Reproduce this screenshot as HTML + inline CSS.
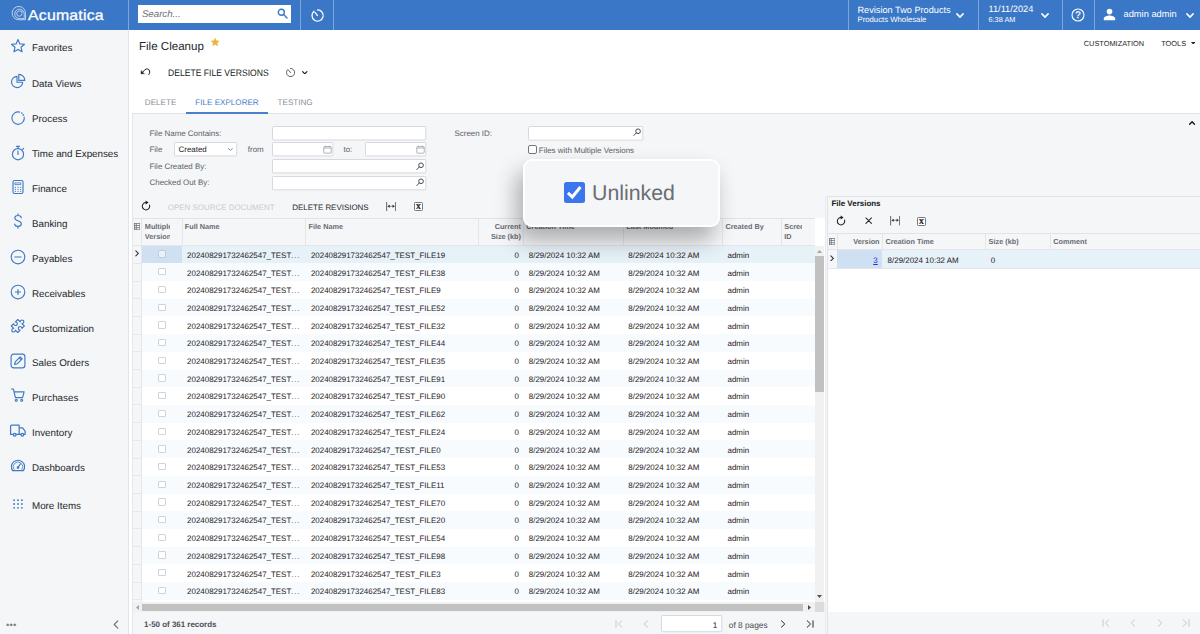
<!DOCTYPE html><html><head><meta charset="utf-8"><title>File Cleanup</title><style>
*{box-sizing:border-box;margin:0;padding:0}
html,body{width:1200px;height:634px;overflow:hidden;background:#fff;font-family:"Liberation Sans",sans-serif;color:#23262b;text-rendering:geometricPrecision}
.abs,.abs-c *{position:absolute}
div,span,svg,a{position:absolute;white-space:nowrap}
#top{left:0;top:0;width:1200px;height:30px;background:#3a77c6}
.tdiv{top:0;width:1px;height:30px;background:#7ea6da}
#side{left:0;top:30px;width:128px;height:604px;background:#f5f6f8}
#sideb{left:128px;top:30px;width:1px;height:604px;background:#e3e4e8}
.si{left:32px;font-size:9.8px;color:#23262b;line-height:12px}
.hd{font-size:7.3px;font-weight:bold;color:#686c73;line-height:9.6px}
.cell{font-size:7.95px;color:#1e2024;line-height:10px}
.lbl{font-size:7.95px;color:#5b6068;line-height:10px}
.inp{background:#fff;border:1px solid #e1e3e7;height:14.6px;border-radius:1px}
.tb{font-size:8.55px;line-height:10px;color:#23262b}
.vline{width:1px;background:#e4e6ea}
.hline{height:1px;background:#e4e6ea}
.cb{width:7.4px;height:7.3px;border:1px solid #d0d3d8;background:#fff;border-radius:1px}
</style></head><body>
<div id="top"></div>
<div class="tdiv" style="left:128px"></div>
<div class="tdiv" style="left:300px"></div>
<div class="tdiv" style="left:333px"></div>
<div class="tdiv" style="left:848px"></div>
<div class="tdiv" style="left:978px"></div>
<div class="tdiv" style="left:1062px"></div>
<div class="tdiv" style="left:1094px"></div>
<svg style="left:10.600px;top:5.300px" width="16.400" height="16.400" viewBox="10 5 17 17" fill="none" stroke="#fff" stroke-width=".85" opacity=".82"><path d="M25 20.300V13.600A6.900 6.900 0 1 0 18.100 20.300Z"/><path d="M23.700 19.100V14.300A4.900 4.900 0 1 0 18.800 19.100Z"/><path d="M21.300 11.300H18.600A2.700 2.700 0 1 0 21.300 14Z"/></svg>
<div style="left:28.200px;top:6.000px;font-size:14.5px;line-height:21px;color:#fff;letter-spacing:.2px;-webkit-text-stroke:.28px #fff;transform:scaleX(1.092);transform-origin:0 50%">Acumatica</div>
<div style="left:137.8px;top:4.7px;width:153.5px;height:18.2px;background:#fff"></div>
<div style="left:141.9px;top:9.8px;font-size:9.7px;line-height:10px;font-style:italic;color:#6b7078">Search...</div>
<svg style="left:277px;top:8px" width="11" height="11" viewBox="0 0 11 11" fill="none" stroke="#3a77c6" stroke-width="1.4"><circle cx="4.3" cy="4.3" r="3"/><path d="M6.6 6.6L10 10" stroke-linecap="round"/></svg>
<svg style="left:310px;top:8px" width="15" height="15" viewBox="0 0 15 15" fill="none" stroke="#fff" stroke-width="1.3" stroke-linecap="round"><path d="M4 3.2A5.6 5.6 0 1 0 7.5 1.9"/><path d="M7.5 7.6L4.9 4.4"/></svg>
<div style="left:857.5px;top:4.6px;font-size:9.18px;line-height:10px;color:#fff">Revision Two Products</div>
<div style="left:857.5px;top:15.2px;font-size:7.75px;line-height:9px;color:#fff">Products Wholesale</div>
<svg style="left:956px;top:13px" width="8" height="5.2" viewBox="0 0 8 5.2" fill="none" stroke="#fff" stroke-width="1.55" stroke-linecap="round" stroke-linejoin="round"><path d="M.9 .9L4 4.1L7.1 .9"/></svg>
<div style="left:988.5px;top:3.6px;font-size:9.22px;line-height:10px;color:#fff">11/11/2024</div>
<div style="left:988.5px;top:15.2px;font-size:7.35px;line-height:9px;color:#fff">6:38 AM</div>
<svg style="left:1041px;top:13px" width="8" height="5.2" viewBox="0 0 8 5.2" fill="none" stroke="#fff" stroke-width="1.55" stroke-linecap="round" stroke-linejoin="round"><path d="M.9 .9L4 4.1L7.1 .9"/></svg>
<svg style="left:1071px;top:8px" width="14" height="14" viewBox="0 0 14 14"><circle cx="7" cy="7" r="6" fill="none" stroke="#fff" stroke-width="1.1"/><text x="7" y="10.3" font-size="9.6" fill="#fff" stroke="#fff" stroke-width=".25" text-anchor="middle" font-family="Liberation Sans, sans-serif">?</text></svg>
<svg style="left:1103px;top:8px" width="13" height="13" viewBox="0 0 13 13" fill="#fff"><circle cx="6.5" cy="3.6" r="2.8"/><path d="M.8 12.2V10.6C.8 8.4 4.4 7.4 6.5 7.4S12.2 8.4 12.2 10.6V12.2Z"/></svg>
<div style="left:1123.5px;top:8.5px;font-size:9.3px;line-height:11px;color:#fff">admin admin</div>
<svg style="left:1185.6px;top:13px" width="8" height="5.2" viewBox="0 0 8 5.2" fill="none" stroke="#fff" stroke-width="1.55" stroke-linecap="round" stroke-linejoin="round"><path d="M.9 .9L4 4.1L7.1 .9"/></svg>
<div id="side"></div><div id="sideb"></div>
<div class="si" style="top:42.9px">Favorites</div>
<div class="si" style="top:79.1px">Data Views</div>
<div class="si" style="top:114.1px">Process</div>
<div class="si" style="top:148.9px">Time and Expenses</div>
<div class="si" style="top:184.0px">Finance</div>
<div class="si" style="top:218.9px">Banking</div>
<div class="si" style="top:253.8px">Payables</div>
<div class="si" style="top:288.7px">Receivables</div>
<div class="si" style="top:323.5px">Customization</div>
<div class="si" style="top:358.3px">Sales Orders</div>
<div class="si" style="top:393.1px">Purchases</div>
<div class="si" style="top:428.0px">Inventory</div>
<div class="si" style="top:462.9px">Dashboards</div>
<div class="si" style="top:500.9px">More Items</div>
<svg style="left:10.4px;top:37.7px" width="16" height="16" viewBox="0 0 16 16" fill="none" stroke="#3f7ac6" stroke-width="1.15" stroke-linecap="round" stroke-linejoin="round"><path d="M8 1.6l1.9 4.3 4.6.4-3.5 3 1.1 4.5L8 11.4 3.9 13.8 5 9.3 1.5 6.3l4.6-.4z"/></svg>
<svg style="left:10.4px;top:72.7px" width="16" height="16" viewBox="0 0 16 16" fill="none" stroke="#3f7ac6" stroke-width="1.15" stroke-linecap="round" stroke-linejoin="round"><path d="M7 3.4A5.6 5.6 0 1 0 12.7 9.2H7z"/><path d="M8.8 1.4v6h6A6 6 0 0 0 8.800 1.400z"/></svg>
<svg style="left:10.4px;top:109.5px" width="16" height="16" viewBox="0 0 16 16" fill="none" stroke="#3f7ac6" stroke-width="1.15" stroke-linecap="round" stroke-linejoin="round"><path d="M9.5 2.1A6.200 6.200 0 1 0 14.2 7"/><circle cx="11.700" cy="3.1" r=".3"/><circle cx="13.300" cy="4.900" r=".3"/></svg>
<svg style="left:10.4px;top:144.6px" width="16" height="16" viewBox="0 0 16 16" fill="none" stroke="#3f7ac6" stroke-width="1.15" stroke-linecap="round" stroke-linejoin="round"><circle cx="8" cy="9.2" r="5.6"/><path d="M8 6v3.400M6.500 1.300h3M8 1.300v2.200M12.700 4.300l.9-.9"/></svg>
<svg style="left:10.4px;top:179.1px" width="16" height="16" viewBox="0 0 16 16" fill="none" stroke="#3f7ac6" stroke-width="1.15" stroke-linecap="round" stroke-linejoin="round"><rect x="3" y="1.5" width="10" height="13" rx="1.5"/><path d="M5.200 3.900h5.600v1.700H5.200z" stroke-width=".8"/><path d="M5.300 8.300h.1M8 8.300h.1M10.700 8.300h.1M5.300 10.300h.1M8 10.300h.1M10.700 10.300h.1M5.300 12.300h.1M8 12.300h.1M10.700 12.300h.1" stroke-width="1.150"/></svg>
<svg style="left:10.4px;top:213.3px" width="16" height="16" viewBox="0 0 16 16" fill="none" stroke="#3f7ac6" stroke-width="1.15" stroke-linecap="round" stroke-linejoin="round"><path d="M11.200 4.800C11.200 3.300 9.800 2.500 8 2.500S4.800 3.400 4.800 5C4.800 8.300 11.300 7.300 11.300 10.800 11.300 12.500 9.800 13.400 8 13.400S4.700 12.500 4.700 11M8 .8v1.700M8 13.400v1.800"/></svg>
<svg style="left:10.4px;top:248.7px" width="16" height="16" viewBox="0 0 16 16" fill="none" stroke="#3f7ac6" stroke-width="1.15" stroke-linecap="round" stroke-linejoin="round"><circle cx="8" cy="8" r="6.800"/><path d="M4.800 8h6.400"/></svg>
<svg style="left:10.4px;top:283.6px" width="16" height="16" viewBox="0 0 16 16" fill="none" stroke="#3f7ac6" stroke-width="1.15" stroke-linecap="round" stroke-linejoin="round"><circle cx="8" cy="8" r="6.800"/><path d="M5.500 8h5M8 5.500v5"/></svg>
<svg style="left:10.4px;top:318.3px" width="16" height="16" viewBox="0 0 16 16" fill="none" stroke="#3f7ac6" stroke-width="1.15" stroke-linecap="round" stroke-linejoin="round"><path d="M-4.6 -4.6H-1.2A1.8 1.8 0 1 1 1.2 -4.6H4.6V-1.2A1.8 1.8 0 1 0 4.6 1.2V4.6H1.2A1.8 1.8 0 1 1 -1.2 4.6H-4.6V1.2A1.8 1.8 0 1 0 -4.6 -1.2Z" transform="translate(7.8,8) rotate(45)"/></svg>
<svg style="left:10.4px;top:353.3px" width="16" height="16" viewBox="0 0 16 16" fill="none" stroke="#3f7ac6" stroke-width="1.15" stroke-linecap="round" stroke-linejoin="round"><rect x="1.100" y="1.100" width="13.800" height="13.800" rx="2.600"/><path d="M4.600 11.400l.6-2.600 5-5 2 2-5 5zM9.200 4.800l2 2"/></svg>
<svg style="left:10.4px;top:387.2px" width="16" height="16" viewBox="0 0 16 16" fill="none" stroke="#3f7ac6" stroke-width="1.15" stroke-linecap="round" stroke-linejoin="round"><path d="M1.400 2h2l2 8.600h7.200l1.500-5.800H4.500"/><circle cx="6.300" cy="13.200" r="1"/><circle cx="11.700" cy="13.200" r="1"/></svg>
<svg style="left:9px;top:421.2px" width="18" height="18" viewBox="0 0 17 16" fill="none" stroke="#3f7ac6" stroke-width="1.15" stroke-linecap="round" stroke-linejoin="round"><path d="M4 12.200H1.500V4.300c0-.5.400-.9.900-.9h7.200v8.800H6.800M9.600 6h3.200l2.400 3v3.200h-1.100M9.600 12.200h1.600"/><circle cx="5.400" cy="12.400" r="1.300"/><circle cx="12.600" cy="12.400" r="1.300"/></svg>
<svg style="left:10.4px;top:457.3px" width="16" height="16" viewBox="0 0 16 16" fill="none" stroke="#3f7ac6" stroke-width="1.15" stroke-linecap="round" stroke-linejoin="round"><path d="M2.600 13.600A6.600 6.600 0 1 1 13.400 13.600z"/><path d="M4 12.500A4.800 4.800 0 1 1 12 12.500" stroke-width=".8"/><path d="M8 10.500l2.400-3.600"/><circle cx="8" cy="10.600" r=".8"/></svg>
<svg style="left:10.6px;top:497.4px" width="14" height="14" viewBox="0 0 16 16" fill="none" stroke="#3f7ac6" stroke-width="1.15" stroke-linecap="round" stroke-linejoin="round"><circle cx="3.6" cy="3.6" r="1.05" fill="#3f7ac6" stroke="none"/><circle cx="3.6" cy="8" r="1.05" fill="#3f7ac6" stroke="none"/><circle cx="3.6" cy="12.4" r="1.05" fill="#3f7ac6" stroke="none"/><circle cx="8" cy="3.6" r="1.05" fill="#3f7ac6" stroke="none"/><circle cx="8" cy="8" r="1.05" fill="#3f7ac6" stroke="none"/><circle cx="8" cy="12.4" r="1.05" fill="#3f7ac6" stroke="none"/><circle cx="12.4" cy="3.6" r="1.05" fill="#3f7ac6" stroke="none"/><circle cx="12.4" cy="8" r="1.05" fill="#3f7ac6" stroke="none"/><circle cx="12.4" cy="12.4" r="1.05" fill="#3f7ac6" stroke="none"/></svg>
<div style="left:6px;top:622px;font-size:9.5px;line-height:8px;color:#7b8088;letter-spacing:.2px">•••</div>
<svg style="left:113px;top:619.5px" width="6" height="9" viewBox="0 0 6 9" fill="none" stroke="#6f747c" stroke-width="1.2" stroke-linecap="round" stroke-linejoin="round"><path d="M4.800 .9L1.200 4.500 4.800 8.100"/></svg>
<div style="left:139px;top:40.3px;font-size:11.55px;line-height:14px;color:#23262b">File Cleanup</div>
<svg style="left:209px;top:36px" width="12" height="12" viewBox="209 36 12 12"><polygon points="215.15,38.15 216.33,40.73 219.14,41.05 217.05,42.97 217.62,45.75 215.15,44.35 212.68,45.75 213.25,42.97 211.16,41.05 213.97,40.73" fill="#ebb43c" stroke="#ebb43c" stroke-width=".5" stroke-linejoin="round"/></svg>
<div class="tb" style="left:1083.8px;top:38.9px;font-size:7.38px">CUSTOMIZATION</div>
<div class="tb" style="left:1161.2px;top:38.9px;font-size:7.38px">TOOLS</div>
<svg style="left:1190.5px;top:41.700px" width="4.4" height="2.8" viewBox="0 0 5 3"><path d="M0 0h5L2.500 3z" fill="#23262b"/></svg>
<svg style="left:139px;top:66px" width="13" height="11" viewBox="139 66 13 11" fill="none" stroke="#17191c" stroke-width="1" stroke-linecap="round" stroke-linejoin="round"><path d="M141.700 73.100L145 69.700C146.600 68.300 149 68.700 149.600 71C150 72.600 149.400 74 148.600 74.800"/><path d="M141.100 70.900V73.700H144Z" fill="#17191c" stroke-width=".5"/></svg>
<div class="tb" style="left:167.5px;top:67.6px;color:#17191c;transform:scale(1.004,1.1);transform-origin:0 78%">DELETE FILE VERSIONS</div>
<svg style="left:285px;top:66.500px" width="11" height="11" viewBox="0 0 15 15" fill="none" stroke="#33363b" stroke-width="1.05" stroke-linecap="round"><path d="M4 3.200A5.600 5.600 0 1 0 7.500 1.900"/><path d="M7.500 7.600L4.900 4.400"/></svg>
<svg style="left:302px;top:70.6px" width="5.6" height="3.6" viewBox="0 0 8 5.2" fill="none" stroke="#1a1c1f" stroke-width="1.7" stroke-linecap="round" stroke-linejoin="round"><path d="M.9 .9L4 4.1L7.1 .9"/></svg>
<div class="tb" style="left:144.800px;top:97.900px;color:#8a8f97;font-size:8.1px">DELETE</div>
<div class="tb" style="left:195.300px;top:97.900px;color:#4a7fca;font-size:8.1px">FILE EXPLORER</div>
<div class="tb" style="left:277.600px;top:97.900px;color:#8a8f97;font-size:8.1px">TESTING</div>
<div style="left:132px;top:113px;width:1068px;height:521px;background:#f5f6f8;border-top:1.4px solid #e2e3e7;border-left:1px solid #e6e7ea"></div>
<div style="left:186px;top:111.800px;width:82px;height:1.8px;background:#4a7fca"></div>
<svg style="left:1188.6px;top:120.6px" width="6.2" height="4.0" viewBox="0 0 8 5.2" fill="none" stroke="#1a1c1f" stroke-width="1.9" stroke-linecap="round" stroke-linejoin="round"><path d="M.9 4.300L4 1.100 7.100 4.300"/></svg>
<div class="lbl" style="left:149.500px;top:128.800px">File Name Contains:</div>
<div class="lbl" style="left:149.500px;top:145.400px">File</div>
<div class="lbl" style="left:149.500px;top:161.800px">File Created By:</div>
<div class="lbl" style="left:149.500px;top:178.400px">Checked Out By:</div>
<svg style="left:272.10px;top:125.60px;overflow:visible" width="154.30" height="14.50"><rect x=".5" y=".5" width="153.30" height="13.50" rx=".8" fill="#fff" stroke="#d6d9de" stroke-width="1"/></svg>
<svg style="left:174.30px;top:142.30px;overflow:visible" width="63.20" height="14.40"><rect x=".5" y=".5" width="62.20" height="13.40" rx=".8" fill="#fff" stroke="#d6d9de" stroke-width="1"/></svg>
<div class="cell" style="left:178.500px;top:145.400px">Created</div>
<svg style="left:227.8px;top:148.3px" width="4.8" height="3.1" viewBox="0 0 8 5.2" fill="none" stroke="#50545b" stroke-width="1.2" stroke-linecap="round" stroke-linejoin="round"><path d="M.9 .9L4 4.1L7.1 .9"/></svg>
<div class="lbl" style="left:247.800px;top:145.400px">from</div>
<svg style="left:272.10px;top:142.30px;overflow:visible" width="61.40" height="14.40"><rect x=".5" y=".5" width="60.40" height="13.40" rx=".8" fill="#fff" stroke="#d6d9de" stroke-width="1"/></svg>
<div class="lbl" style="left:343.500px;top:145.400px">to:</div>
<svg style="left:365.20px;top:142.30px;overflow:visible" width="61.20" height="14.40"><rect x=".5" y=".5" width="60.20" height="13.40" rx=".8" fill="#fff" stroke="#d6d9de" stroke-width="1"/></svg>
<svg style="left:272.10px;top:158.90px;overflow:visible" width="154.30" height="14.40"><rect x=".5" y=".5" width="153.30" height="13.40" rx=".8" fill="#fff" stroke="#d6d9de" stroke-width="1"/></svg>
<svg style="left:272.10px;top:175.55px;overflow:visible" width="154.30" height="14.35"><rect x=".5" y=".5" width="153.30" height="13.35" rx=".8" fill="#fff" stroke="#d6d9de" stroke-width="1"/></svg>
<svg style="left:323.3px;top:145px" width="9" height="9" viewBox="0 0 9 9" fill="none" stroke="#9a9ea5" stroke-width=".8"><rect x=".8" y="1.600" width="7.400" height="6.600" rx=".8"/><path d="M.8 3h7.400M2.600 .6v1.400M6.400 .6v1.400"/></svg>
<svg style="left:415.5px;top:145px" width="9" height="9" viewBox="0 0 9 9" fill="none" stroke="#9a9ea5" stroke-width=".8"><rect x=".8" y="1.600" width="7.400" height="6.600" rx=".8"/><path d="M.8 3h7.400M2.600 .6v1.400M6.400 .6v1.400"/></svg>
<svg style="left:415.5px;top:161.6px" width="8.400" height="8.400" viewBox="0 0 9 9" fill="none" stroke="#3a3d42" stroke-width="1"><circle cx="5.400" cy="3.500" r="2.500"/><path d="M3.600 5.300L.9 8" stroke-linecap="round"/></svg>
<svg style="left:415.5px;top:178.2px" width="8.400" height="8.400" viewBox="0 0 9 9" fill="none" stroke="#3a3d42" stroke-width="1"><circle cx="5.400" cy="3.500" r="2.500"/><path d="M3.600 5.300L.9 8" stroke-linecap="round"/></svg>
<div class="lbl" style="left:454.500px;top:128.800px">Screen ID:</div>
<svg style="left:528.20px;top:125.50px;overflow:visible" width="115.30" height="14.70"><rect x=".5" y=".5" width="114.30" height="13.70" rx=".8" fill="#fff" stroke="#d6d9de" stroke-width="1"/></svg>
<svg style="left:632.5px;top:128.4px" width="8.400" height="8.400" viewBox="0 0 9 9" fill="none" stroke="#3a3d42" stroke-width="1"><circle cx="5.400" cy="3.500" r="2.500"/><path d="M3.600 5.300L.9 8" stroke-linecap="round"/></svg>
<div style="left:528.300px;top:145.300px;width:8.400px;height:8.400px;border:1px solid #74777c;border-radius:2px;background:#fff"></div>
<div class="lbl" style="left:538.800px;top:145.800px">Files with Multiple Versions</div>
<svg style="left:141.100px;top:200.300px" width="10" height="11" viewBox="0 0 10 11" fill="none" stroke="#1e2024" stroke-width="1.05" stroke-linecap="round"><path d="M8.550 5.100A3.700 3.700 0 1 1 5 2.500"/><path d="M4.600 .5V4.500L7.600 2.500Z" fill="#1e2024" stroke="none"/></svg>
<div class="tb" style="left:167.800px;top:202.600px;color:#c9ccd1;font-size:7.95px">OPEN SOURCE DOCUMENT</div>
<div class="tb" style="left:292.300px;top:202.600px;font-size:7.95px">DELETE REVISIONS</div>
<svg style="left:385.7px;top:201.6px" width="10.300" height="9.400" viewBox="0 0 11 9" preserveAspectRatio="none" fill="none" stroke="#3d3f44" stroke-width=".8"><path d="M.7 0v9M10.300 0v9"/><path d="M3 4.100h5" stroke="#85888d" stroke-width=".9"/><path d="M1.500 4.100L4 2.600V5.600ZM9.500 4.100L7 2.600V5.600Z" fill="#23262b" stroke="none"/></svg>
<svg style="left:413.8px;top:202px" width="9" height="9" viewBox="0 0 9 9"><rect x=".5" y=".5" width="8" height="8" rx=".9" fill="#fff" stroke="#55585d" stroke-width=".8"/><text x="4.500" y="7.050" font-size="7.300" font-weight="bold" text-anchor="middle" fill="#111" stroke="#111" stroke-width=".22" font-family="Liberation Serif, serif">X</text></svg>
<div style="left:133px;top:218.400px;width:691.5px;height:384px;background:#fff"></div>
<div style="left:133px;top:218.400px;width:681.7px;height:27.2px;background:#f5f6f8;border-top:1px solid #e2e3e7"></div>
<div style="left:141.7px;top:245.60px;width:673.0px;height:17.71px;background:#e7f1f8"></div>
<div style="left:141.7px;top:245.60px;width:40.5px;height:17.71px;background:#cfe0f2"></div>
<div class="cb" style="left:158.200px;top:250.40px;background:#e9f1fa;border-color:#c3cbd6"></div>
<div class="cell" style="left:187.100px;top:250.80px">202408291732462547_TEST<span style="position:static;letter-spacing:.75px;color:#63676d">...</span></div>
<div class="cell" style="left:310.900px;top:250.80px">202408291732462547_TEST_FILE19</div>
<div class="cell" style="left:500px;width:19px;text-align:right;top:250.80px">0</div>
<div class="cell" style="left:528.800px;top:250.80px">8/29/2024 10:32 AM</div>
<div class="cell" style="left:628.300px;top:250.80px">8/29/2024 10:32 AM</div>
<div class="cell" style="left:727.500px;top:250.80px">admin</div>
<div style="left:141.7px;top:263.31px;width:673.0px;height:17.71px;background:#f8fbfe"></div>
<div class="cb" style="left:158.200px;top:268.11px"></div>
<div class="cell" style="left:187.100px;top:268.51px">202408291732462547_TEST<span style="position:static;letter-spacing:.75px;color:#63676d">...</span></div>
<div class="cell" style="left:310.900px;top:268.51px">202408291732462547_TEST_FILE38</div>
<div class="cell" style="left:500px;width:19px;text-align:right;top:268.51px">0</div>
<div class="cell" style="left:528.800px;top:268.51px">8/29/2024 10:32 AM</div>
<div class="cell" style="left:628.300px;top:268.51px">8/29/2024 10:32 AM</div>
<div class="cell" style="left:727.500px;top:268.51px">admin</div>
<div style="left:141.7px;top:281.02px;width:673.0px;height:17.71px;background:#ffffff"></div>
<div class="cb" style="left:158.200px;top:285.82px"></div>
<div class="cell" style="left:187.100px;top:286.22px">202408291732462547_TEST<span style="position:static;letter-spacing:.75px;color:#63676d">...</span></div>
<div class="cell" style="left:310.900px;top:286.22px">202408291732462547_TEST_FILE9</div>
<div class="cell" style="left:500px;width:19px;text-align:right;top:286.22px">0</div>
<div class="cell" style="left:528.800px;top:286.22px">8/29/2024 10:32 AM</div>
<div class="cell" style="left:628.300px;top:286.22px">8/29/2024 10:32 AM</div>
<div class="cell" style="left:727.500px;top:286.22px">admin</div>
<div style="left:141.7px;top:298.73px;width:673.0px;height:17.71px;background:#f8fbfe"></div>
<div class="cb" style="left:158.200px;top:303.53px"></div>
<div class="cell" style="left:187.100px;top:303.93px">202408291732462547_TEST<span style="position:static;letter-spacing:.75px;color:#63676d">...</span></div>
<div class="cell" style="left:310.900px;top:303.93px">202408291732462547_TEST_FILE52</div>
<div class="cell" style="left:500px;width:19px;text-align:right;top:303.93px">0</div>
<div class="cell" style="left:528.800px;top:303.93px">8/29/2024 10:32 AM</div>
<div class="cell" style="left:628.300px;top:303.93px">8/29/2024 10:32 AM</div>
<div class="cell" style="left:727.500px;top:303.93px">admin</div>
<div style="left:141.7px;top:316.44px;width:673.0px;height:17.71px;background:#ffffff"></div>
<div class="cb" style="left:158.200px;top:321.24px"></div>
<div class="cell" style="left:187.100px;top:321.64px">202408291732462547_TEST<span style="position:static;letter-spacing:.75px;color:#63676d">...</span></div>
<div class="cell" style="left:310.900px;top:321.64px">202408291732462547_TEST_FILE32</div>
<div class="cell" style="left:500px;width:19px;text-align:right;top:321.64px">0</div>
<div class="cell" style="left:528.800px;top:321.64px">8/29/2024 10:32 AM</div>
<div class="cell" style="left:628.300px;top:321.64px">8/29/2024 10:32 AM</div>
<div class="cell" style="left:727.500px;top:321.64px">admin</div>
<div style="left:141.7px;top:334.15px;width:673.0px;height:17.71px;background:#f8fbfe"></div>
<div class="cb" style="left:158.200px;top:338.95px"></div>
<div class="cell" style="left:187.100px;top:339.35px">202408291732462547_TEST<span style="position:static;letter-spacing:.75px;color:#63676d">...</span></div>
<div class="cell" style="left:310.900px;top:339.35px">202408291732462547_TEST_FILE44</div>
<div class="cell" style="left:500px;width:19px;text-align:right;top:339.35px">0</div>
<div class="cell" style="left:528.800px;top:339.35px">8/29/2024 10:32 AM</div>
<div class="cell" style="left:628.300px;top:339.35px">8/29/2024 10:32 AM</div>
<div class="cell" style="left:727.500px;top:339.35px">admin</div>
<div style="left:141.7px;top:351.86px;width:673.0px;height:17.71px;background:#ffffff"></div>
<div class="cb" style="left:158.200px;top:356.66px"></div>
<div class="cell" style="left:187.100px;top:357.06px">202408291732462547_TEST<span style="position:static;letter-spacing:.75px;color:#63676d">...</span></div>
<div class="cell" style="left:310.900px;top:357.06px">202408291732462547_TEST_FILE35</div>
<div class="cell" style="left:500px;width:19px;text-align:right;top:357.06px">0</div>
<div class="cell" style="left:528.800px;top:357.06px">8/29/2024 10:32 AM</div>
<div class="cell" style="left:628.300px;top:357.06px">8/29/2024 10:32 AM</div>
<div class="cell" style="left:727.500px;top:357.06px">admin</div>
<div style="left:141.7px;top:369.57px;width:673.0px;height:17.71px;background:#f8fbfe"></div>
<div class="cb" style="left:158.200px;top:374.37px"></div>
<div class="cell" style="left:187.100px;top:374.77px">202408291732462547_TEST<span style="position:static;letter-spacing:.75px;color:#63676d">...</span></div>
<div class="cell" style="left:310.900px;top:374.77px">202408291732462547_TEST_FILE91</div>
<div class="cell" style="left:500px;width:19px;text-align:right;top:374.77px">0</div>
<div class="cell" style="left:528.800px;top:374.77px">8/29/2024 10:32 AM</div>
<div class="cell" style="left:628.300px;top:374.77px">8/29/2024 10:32 AM</div>
<div class="cell" style="left:727.500px;top:374.77px">admin</div>
<div style="left:141.7px;top:387.28px;width:673.0px;height:17.71px;background:#ffffff"></div>
<div class="cb" style="left:158.200px;top:392.08px"></div>
<div class="cell" style="left:187.100px;top:392.48px">202408291732462547_TEST<span style="position:static;letter-spacing:.75px;color:#63676d">...</span></div>
<div class="cell" style="left:310.900px;top:392.48px">202408291732462547_TEST_FILE90</div>
<div class="cell" style="left:500px;width:19px;text-align:right;top:392.48px">0</div>
<div class="cell" style="left:528.800px;top:392.48px">8/29/2024 10:32 AM</div>
<div class="cell" style="left:628.300px;top:392.48px">8/29/2024 10:32 AM</div>
<div class="cell" style="left:727.500px;top:392.48px">admin</div>
<div style="left:141.7px;top:404.99px;width:673.0px;height:17.71px;background:#f8fbfe"></div>
<div class="cb" style="left:158.200px;top:409.79px"></div>
<div class="cell" style="left:187.100px;top:410.19px">202408291732462547_TEST<span style="position:static;letter-spacing:.75px;color:#63676d">...</span></div>
<div class="cell" style="left:310.900px;top:410.19px">202408291732462547_TEST_FILE62</div>
<div class="cell" style="left:500px;width:19px;text-align:right;top:410.19px">0</div>
<div class="cell" style="left:528.800px;top:410.19px">8/29/2024 10:32 AM</div>
<div class="cell" style="left:628.300px;top:410.19px">8/29/2024 10:32 AM</div>
<div class="cell" style="left:727.500px;top:410.19px">admin</div>
<div style="left:141.7px;top:422.70px;width:673.0px;height:17.71px;background:#ffffff"></div>
<div class="cb" style="left:158.200px;top:427.50px"></div>
<div class="cell" style="left:187.100px;top:427.90px">202408291732462547_TEST<span style="position:static;letter-spacing:.75px;color:#63676d">...</span></div>
<div class="cell" style="left:310.900px;top:427.90px">202408291732462547_TEST_FILE24</div>
<div class="cell" style="left:500px;width:19px;text-align:right;top:427.90px">0</div>
<div class="cell" style="left:528.800px;top:427.90px">8/29/2024 10:32 AM</div>
<div class="cell" style="left:628.300px;top:427.90px">8/29/2024 10:32 AM</div>
<div class="cell" style="left:727.500px;top:427.90px">admin</div>
<div style="left:141.7px;top:440.41px;width:673.0px;height:17.71px;background:#f8fbfe"></div>
<div class="cb" style="left:158.200px;top:445.21px"></div>
<div class="cell" style="left:187.100px;top:445.61px">202408291732462547_TEST<span style="position:static;letter-spacing:.75px;color:#63676d">...</span></div>
<div class="cell" style="left:310.900px;top:445.61px">202408291732462547_TEST_FILE0</div>
<div class="cell" style="left:500px;width:19px;text-align:right;top:445.61px">0</div>
<div class="cell" style="left:528.800px;top:445.61px">8/29/2024 10:32 AM</div>
<div class="cell" style="left:628.300px;top:445.61px">8/29/2024 10:32 AM</div>
<div class="cell" style="left:727.500px;top:445.61px">admin</div>
<div style="left:141.7px;top:458.12px;width:673.0px;height:17.71px;background:#ffffff"></div>
<div class="cb" style="left:158.200px;top:462.92px"></div>
<div class="cell" style="left:187.100px;top:463.32px">202408291732462547_TEST<span style="position:static;letter-spacing:.75px;color:#63676d">...</span></div>
<div class="cell" style="left:310.900px;top:463.32px">202408291732462547_TEST_FILE53</div>
<div class="cell" style="left:500px;width:19px;text-align:right;top:463.32px">0</div>
<div class="cell" style="left:528.800px;top:463.32px">8/29/2024 10:32 AM</div>
<div class="cell" style="left:628.300px;top:463.32px">8/29/2024 10:32 AM</div>
<div class="cell" style="left:727.500px;top:463.32px">admin</div>
<div style="left:141.7px;top:475.83px;width:673.0px;height:17.71px;background:#f8fbfe"></div>
<div class="cb" style="left:158.200px;top:480.63px"></div>
<div class="cell" style="left:187.100px;top:481.03px">202408291732462547_TEST<span style="position:static;letter-spacing:.75px;color:#63676d">...</span></div>
<div class="cell" style="left:310.900px;top:481.03px">202408291732462547_TEST_FILE11</div>
<div class="cell" style="left:500px;width:19px;text-align:right;top:481.03px">0</div>
<div class="cell" style="left:528.800px;top:481.03px">8/29/2024 10:32 AM</div>
<div class="cell" style="left:628.300px;top:481.03px">8/29/2024 10:32 AM</div>
<div class="cell" style="left:727.500px;top:481.03px">admin</div>
<div style="left:141.7px;top:493.54px;width:673.0px;height:17.71px;background:#ffffff"></div>
<div class="cb" style="left:158.200px;top:498.34px"></div>
<div class="cell" style="left:187.100px;top:498.74px">202408291732462547_TEST<span style="position:static;letter-spacing:.75px;color:#63676d">...</span></div>
<div class="cell" style="left:310.900px;top:498.74px">202408291732462547_TEST_FILE70</div>
<div class="cell" style="left:500px;width:19px;text-align:right;top:498.74px">0</div>
<div class="cell" style="left:528.800px;top:498.74px">8/29/2024 10:32 AM</div>
<div class="cell" style="left:628.300px;top:498.74px">8/29/2024 10:32 AM</div>
<div class="cell" style="left:727.500px;top:498.74px">admin</div>
<div style="left:141.7px;top:511.25px;width:673.0px;height:17.71px;background:#f8fbfe"></div>
<div class="cb" style="left:158.200px;top:516.05px"></div>
<div class="cell" style="left:187.100px;top:516.45px">202408291732462547_TEST<span style="position:static;letter-spacing:.75px;color:#63676d">...</span></div>
<div class="cell" style="left:310.900px;top:516.45px">202408291732462547_TEST_FILE20</div>
<div class="cell" style="left:500px;width:19px;text-align:right;top:516.45px">0</div>
<div class="cell" style="left:528.800px;top:516.45px">8/29/2024 10:32 AM</div>
<div class="cell" style="left:628.300px;top:516.45px">8/29/2024 10:32 AM</div>
<div class="cell" style="left:727.500px;top:516.45px">admin</div>
<div style="left:141.7px;top:528.96px;width:673.0px;height:17.71px;background:#ffffff"></div>
<div class="cb" style="left:158.200px;top:533.76px"></div>
<div class="cell" style="left:187.100px;top:534.16px">202408291732462547_TEST<span style="position:static;letter-spacing:.75px;color:#63676d">...</span></div>
<div class="cell" style="left:310.900px;top:534.16px">202408291732462547_TEST_FILE54</div>
<div class="cell" style="left:500px;width:19px;text-align:right;top:534.16px">0</div>
<div class="cell" style="left:528.800px;top:534.16px">8/29/2024 10:32 AM</div>
<div class="cell" style="left:628.300px;top:534.16px">8/29/2024 10:32 AM</div>
<div class="cell" style="left:727.500px;top:534.16px">admin</div>
<div style="left:141.7px;top:546.67px;width:673.0px;height:17.71px;background:#f8fbfe"></div>
<div class="cb" style="left:158.200px;top:551.47px"></div>
<div class="cell" style="left:187.100px;top:551.87px">202408291732462547_TEST<span style="position:static;letter-spacing:.75px;color:#63676d">...</span></div>
<div class="cell" style="left:310.900px;top:551.87px">202408291732462547_TEST_FILE98</div>
<div class="cell" style="left:500px;width:19px;text-align:right;top:551.87px">0</div>
<div class="cell" style="left:528.800px;top:551.87px">8/29/2024 10:32 AM</div>
<div class="cell" style="left:628.300px;top:551.87px">8/29/2024 10:32 AM</div>
<div class="cell" style="left:727.500px;top:551.87px">admin</div>
<div style="left:141.7px;top:564.38px;width:673.0px;height:17.71px;background:#ffffff"></div>
<div class="cb" style="left:158.200px;top:569.18px"></div>
<div class="cell" style="left:187.100px;top:569.58px">202408291732462547_TEST<span style="position:static;letter-spacing:.75px;color:#63676d">...</span></div>
<div class="cell" style="left:310.900px;top:569.58px">202408291732462547_TEST_FILE3</div>
<div class="cell" style="left:500px;width:19px;text-align:right;top:569.58px">0</div>
<div class="cell" style="left:528.800px;top:569.58px">8/29/2024 10:32 AM</div>
<div class="cell" style="left:628.300px;top:569.58px">8/29/2024 10:32 AM</div>
<div class="cell" style="left:727.500px;top:569.58px">admin</div>
<div style="left:141.7px;top:582.09px;width:673.0px;height:17.71px;background:#f8fbfe"></div>
<div class="cb" style="left:158.200px;top:586.89px"></div>
<div class="cell" style="left:187.100px;top:587.29px">202408291732462547_TEST<span style="position:static;letter-spacing:.75px;color:#63676d">...</span></div>
<div class="cell" style="left:310.900px;top:587.29px">202408291732462547_TEST_FILE83</div>
<div class="cell" style="left:500px;width:19px;text-align:right;top:587.29px">0</div>
<div class="cell" style="left:528.800px;top:587.29px">8/29/2024 10:32 AM</div>
<div class="cell" style="left:628.300px;top:587.29px">8/29/2024 10:32 AM</div>
<div class="cell" style="left:727.500px;top:587.29px">admin</div>
<div style="left:133px;top:245.600px;width:8.7px;height:356.400px;background:#f5f6f8"></div>
<div class="hline" style="left:133px;top:245.10px;width:8.7px;background:#e6e8eb"></div>
<div class="hline" style="left:133px;top:262.81px;width:8.7px;background:#e6e8eb"></div>
<div class="hline" style="left:133px;top:280.52px;width:8.7px;background:#e6e8eb"></div>
<div class="hline" style="left:133px;top:298.23px;width:8.7px;background:#e6e8eb"></div>
<div class="hline" style="left:133px;top:315.94px;width:8.7px;background:#e6e8eb"></div>
<div class="hline" style="left:133px;top:333.65px;width:8.7px;background:#e6e8eb"></div>
<div class="hline" style="left:133px;top:351.36px;width:8.7px;background:#e6e8eb"></div>
<div class="hline" style="left:133px;top:369.07px;width:8.7px;background:#e6e8eb"></div>
<div class="hline" style="left:133px;top:386.78px;width:8.7px;background:#e6e8eb"></div>
<div class="hline" style="left:133px;top:404.49px;width:8.7px;background:#e6e8eb"></div>
<div class="hline" style="left:133px;top:422.20px;width:8.7px;background:#e6e8eb"></div>
<div class="hline" style="left:133px;top:439.91px;width:8.7px;background:#e6e8eb"></div>
<div class="hline" style="left:133px;top:457.62px;width:8.7px;background:#e6e8eb"></div>
<div class="hline" style="left:133px;top:475.33px;width:8.7px;background:#e6e8eb"></div>
<div class="hline" style="left:133px;top:493.04px;width:8.7px;background:#e6e8eb"></div>
<div class="hline" style="left:133px;top:510.75px;width:8.7px;background:#e6e8eb"></div>
<div class="hline" style="left:133px;top:528.46px;width:8.7px;background:#e6e8eb"></div>
<div class="hline" style="left:133px;top:546.17px;width:8.7px;background:#e6e8eb"></div>
<div class="hline" style="left:133px;top:563.88px;width:8.7px;background:#e6e8eb"></div>
<div class="hline" style="left:133px;top:581.59px;width:8.7px;background:#e6e8eb"></div>
<div class="hline" style="left:133px;top:599.30px;width:8.7px;background:#e6e8eb"></div>
<div class="vline" style="left:141.2px;top:219px;height:383px"></div>
<div class="vline" style="left:181.7px;top:219px;height:26.600px"></div>
<div class="vline" style="left:305.1px;top:219px;height:26.600px"></div>
<div class="vline" style="left:478.1px;top:219px;height:26.600px"></div>
<div class="vline" style="left:522.7px;top:219px;height:26.600px"></div>
<div class="vline" style="left:622.8px;top:219px;height:26.600px"></div>
<div class="vline" style="left:721.8px;top:219px;height:26.600px"></div>
<div class="vline" style="left:780.8px;top:219px;height:26.600px"></div>
<div class="hline" style="left:133px;top:245.100px;width:681.7px"></div>
<svg style="left:134.800px;top:250.400px" width="4.2" height="6.700" viewBox="0 0 5 8" fill="none" stroke="#33363b" stroke-width="1.35" stroke-linecap="round" stroke-linejoin="round"><path d="M1 1l3 3-3 3"/></svg>
<svg style="left:134.1px;top:223px" width="6.300" height="7.200" viewBox="0 0 7 8" fill="none" stroke="#6a6e75" stroke-width=".85"><rect x=".4" y=".4" width="6.200" height="7.200"/><path d="M.4 2.800h6.200M.4 5.200h6.200M2.600 .4v7.200"/></svg>
<div class="hd" style="left:144.800px;top:222.400px;width:25px;overflow:hidden">Multiple<br>Versions</div>
<div class="hd" style="left:184.800px;top:222.400px">Full Name</div>
<div class="hd" style="left:308.600px;top:222.400px">File Name</div>
<div class="hd" style="left:480px;top:222.400px;width:41px;text-align:right">Current<br>Size (kb)</div>
<div class="hd" style="left:526.300px;top:222.400px">Creation Time</div>
<div class="hd" style="left:626.300px;top:222.400px">Last Modified</div>
<div class="hd" style="left:725.400px;top:222.400px">Created By</div>
<div class="hd" style="left:784.300px;top:222.400px;width:17.800px;overflow:hidden">Screen<br>ID</div>
<div style="left:814.500px;top:245.600px;width:9.800px;height:356.400px;background:#f1f1f1"></div>
<div style="left:815px;top:256.200px;width:8.500px;height:135.500px;background:#c1c1c1"></div>
<svg style="left:817px;top:249.800px" width="5" height="3" viewBox="0 0 5 3"><path d="M0 3h5L2.500 0z" fill="#a3a3a3"/></svg>
<svg style="left:817px;top:595px" width="5" height="3" viewBox="0 0 5 3"><path d="M0 0h5L2.500 3z" fill="#505050"/></svg>
<div style="left:133px;top:602px;width:691.500px;height:10px;background:#f1f1f1"></div>
<div style="left:142.400px;top:603.700px;width:661px;height:7.800px;background:#c1c1c1"></div>
<svg style="left:136.400px;top:604.800px" width="3" height="5" viewBox="0 0 3 5"><path d="M3 0v5L0 2.500z" fill="#a3a3a3"/></svg>
<svg style="left:807.500px;top:604.800px" width="3" height="5" viewBox="0 0 3 5"><path d="M0 0v5L3 2.500z" fill="#505050"/></svg>
<div style="left:814.700px;top:602px;width:9.800px;height:10px;background:#dcdcdc"></div>
<div class="cell" style="left:144.100px;top:619.700px;color:#4a4e55;font-size:7.95px;font-weight:bold">1-50 of 361 records</div>
<svg style="left:614.9px;top:620px" width="8" height="8" viewBox="0 0 8 8" fill="none" stroke="#c3c6cb" stroke-width="1" stroke-linecap="round" stroke-linejoin="round"><path d="M1 .8v6.400M6.800 .8L3.400 4l3.400 3.200"/></svg>
<svg style="left:642.8px;top:620px" width="6" height="8" viewBox="0 0 6 8" fill="none" stroke="#c3c6cb" stroke-width="1" stroke-linecap="round" stroke-linejoin="round"><path d="M4.600 .8L1.200 4l3.400 3.200"/></svg>
<svg style="left:661.30px;top:615.20px;overflow:visible" width="61.30" height="17.20"><rect x=".5" y=".5" width="60.30" height="16.20" rx=".8" fill="#fff" stroke="#d6d9de" stroke-width="1"/></svg>
<div class="cell" style="left:700px;width:17.400px;text-align:right;top:620px;font-size:8.3px">1</div>
<div class="cell" style="left:728.800px;top:620px;color:#4a4e55;font-size:8.3px">of 8 pages</div>
<svg style="left:780.4px;top:620px" width="6" height="8" viewBox="0 0 6 8" fill="none" stroke="#23262b" stroke-width="1" stroke-linecap="round" stroke-linejoin="round"><path d="M1.400 .8L4.800 4 1.400 7.200"/></svg>
<svg style="left:806.4px;top:620px" width="8" height="8" viewBox="0 0 8 8" fill="none" stroke="#23262b" stroke-width="1" stroke-linecap="round" stroke-linejoin="round"><path d="M7 .8v6.400M1.200 .8L4.600 4 1.200 7.200"/></svg>
<div class="vline" style="left:824.500px;top:196px;height:438px;background:#eaecef"></div>
<div style="left:827.200px;top:196px;width:373px;height:438px;border-top:1px solid #e2e3e7;border-left:1px solid #e2e3e7;background:#f5f6f8"></div>
<div class="cell" style="left:831.400px;top:198.900px;font-weight:bold;font-size:7.97px;color:#15171a">File Versions</div>
<svg style="left:836.100px;top:215.000px" width="10" height="11" viewBox="0 0 10 11" fill="none" stroke="#1e2024" stroke-width="1.05" stroke-linecap="round"><path d="M8.550 5.100A3.700 3.700 0 1 1 5 2.500"/><path d="M4.600 .5V4.500L7.600 2.500Z" fill="#1e2024" stroke="none"/></svg>
<svg style="left:864.600px;top:217.300px" width="7.400" height="7.400" viewBox="0 0 8 8" fill="none" stroke="#23262b" stroke-width="1.100" stroke-linecap="round"><path d="M1 1l6 6M7 1L1 7"/></svg>
<svg style="left:890px;top:216.2px" width="10.300" height="9.400" viewBox="0 0 11 9" preserveAspectRatio="none" fill="none" stroke="#3d3f44" stroke-width=".8"><path d="M.7 0v9M10.300 0v9"/><path d="M3 4.100h5" stroke="#85888d" stroke-width=".9"/><path d="M1.500 4.100L4 2.600V5.600ZM9.500 4.100L7 2.600V5.600Z" fill="#23262b" stroke="none"/></svg>
<svg style="left:917.3px;top:216.6px" width="9" height="9" viewBox="0 0 9 9"><rect x=".5" y=".5" width="8" height="8" rx=".9" fill="#fff" stroke="#55585d" stroke-width=".8"/><text x="4.500" y="7.050" font-size="7.300" font-weight="bold" text-anchor="middle" fill="#111" stroke="#111" stroke-width=".22" font-family="Liberation Serif, serif">X</text></svg>
<div style="left:828.2px;top:232.700px;width:372px;height:379.300px;background:#fff"></div>
<div style="left:828.2px;top:232.700px;width:372px;height:17.600px;background:#f5f6f8;border-top:1px solid #e2e3e7;border-bottom:1px solid #e4e6ea"></div>
<div style="left:828.2px;top:250.300px;width:372px;height:18.300px;background:#e7f1f8;border-bottom:1px solid #e4e6ea"></div>
<div style="left:828.2px;top:250.300px;width:9.200px;height:18.300px;background:#f5f6f8;border-bottom:1px solid #e4e6ea"></div>
<div style="left:837.400px;top:250.300px;width:45.100px;height:17.700px;background:#cfe0f2"></div>
<div class="vline" style="left:836.9px;top:233.500px;height:16.800px"></div>
<div class="vline" style="left:882.0px;top:233.500px;height:16.800px"></div>
<div class="vline" style="left:984.9px;top:233.500px;height:16.800px"></div>
<div class="vline" style="left:1049.8px;top:233.500px;height:16.800px"></div>
<svg style="left:829px;top:238.3px" width="6.300" height="7.200" viewBox="0 0 7 8" fill="none" stroke="#6a6e75" stroke-width=".85"><rect x=".4" y=".4" width="6.200" height="7.200"/><path d="M.4 2.800h6.200M.4 5.200h6.200M2.600 .4v7.200"/></svg>
<svg style="left:829.600px;top:254.800px" width="4.2" height="6.700" viewBox="0 0 5 8" fill="none" stroke="#33363b" stroke-width="1.35" stroke-linecap="round" stroke-linejoin="round"><path d="M1 1l3 3-3 3"/></svg>
<div class="hd" style="left:840px;width:39.600px;text-align:right;top:236.800px">Version</div>
<div class="hd" style="left:885.400px;top:236.800px">Creation Time</div>
<div class="hd" style="left:988.600px;top:236.800px">Size (kb)</div>
<div class="hd" style="left:1053.200px;top:236.800px">Comment</div>
<div class="cell" style="left:860px;width:17.700px;text-align:right;top:255.700px;color:#2a2ad8;text-decoration:underline">3</div>
<div class="cell" style="left:887.600px;top:255.700px">8/29/2024 10:32 AM</div>
<div class="cell" style="left:990.800px;top:255.700px">0</div>
<svg style="left:1101.5px;top:619.4px" width="8" height="8" viewBox="0 0 8 8" fill="none" stroke="#c3c6cb" stroke-width="1" stroke-linecap="round" stroke-linejoin="round"><path d="M1 .8v6.400M6.800 .8L3.400 4l3.400 3.200"/></svg>
<svg style="left:1129.5px;top:619.4px" width="6" height="8" viewBox="0 0 6 8" fill="none" stroke="#c3c6cb" stroke-width="1" stroke-linecap="round" stroke-linejoin="round"><path d="M4.600 .8L1.200 4l3.400 3.200"/></svg>
<svg style="left:1156.8px;top:619.4px" width="6" height="8" viewBox="0 0 6 8" fill="none" stroke="#c3c6cb" stroke-width="1" stroke-linecap="round" stroke-linejoin="round"><path d="M1.400 .8L4.800 4 1.400 7.200"/></svg>
<svg style="left:1182px;top:619.4px" width="8" height="8" viewBox="0 0 8 8" fill="none" stroke="#c3c6cb" stroke-width="1" stroke-linecap="round" stroke-linejoin="round"><path d="M7 .8v6.400M1.200 .8L4.600 4 1.200 7.200"/></svg>
<div style="left:523.400px;top:159px;width:196.400px;height:67.600px;background:#f5f6f8;border:2px solid #fff;border-radius:9px;box-shadow:-6px 13px 22px rgba(0,0,0,.31)"></div>
<div style="left:564.200px;top:181.800px;width:20.800px;height:21.200px;background:#3b76ec;border-radius:2.500px"></div>
<svg style="left:564.200px;top:182.100px" width="20.800" height="20.800" viewBox="0 0 20 20" fill="none" stroke="#fff" stroke-width="2.900" stroke-linecap="butt" stroke-linejoin="miter"><path d="M3.800 10.400L8 14.400 15.800 4.800"/></svg>
<div style="left:592px;top:180.800px;font-size:21.300px;line-height:24px;color:#696d74">Unlinked</div>
</body></html>
